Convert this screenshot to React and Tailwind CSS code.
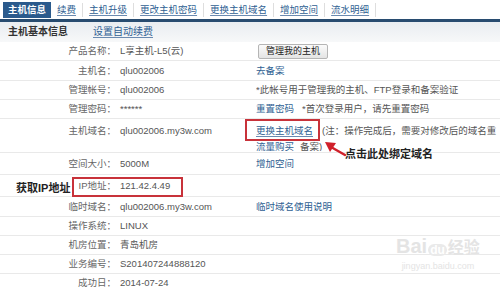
import React from 'react';

const font = { fontFamily: '"Liberation Sans", "Noto Sans CJK SC", sans-serif' };

const tabs = ['续费', '主机升级', '更改主机密码', '更换主机域名', '增加空间', '流水明细'];

const Link = ({ children }) => (
  <span className="text-[#2f5f93] underline underline-offset-2 decoration-[#6a8ab0]">{children}</span>
);

const Row = ({ label, value, extra, h = 'h-[20px]', align = 'items-center' }) => (
  <div className={`flex ${align} border-b border-[#e9e9e9] ${h}`}>
    <div className="w-[116px] shrink-0 text-right text-[#666]">{label}：</div>
    <div className="w-[140px] shrink-0 pl-[4px] text-[#555] whitespace-nowrap">{value}</div>
    <div className="flex-1 whitespace-nowrap overflow-hidden text-[#555]">{extra}</div>
  </div>
);

export default function App() {
  return (
    <div className="relative w-[500px] h-[287px] overflow-hidden bg-white text-[9.5px] leading-none" style={font}>
      {/* tab bar */}
      <div className="flex items-end h-[22px] border-b-[3px] border-[#284c70] pl-[3px]">
        <div className="h-[16px] mb-[1px] px-[5px] flex items-center bg-[#2b5a8c] text-white font-bold text-[9.5px]">主机信息</div>
        {tabs.map((t) => (
          <div key={t} className="h-[14px] mb-[2px] px-[6px] flex items-center border-r border-[#dedede] text-[9.5px]">
            <Link>{t}</Link>
          </div>
        ))}
      </div>

      {/* sub header */}
      <div className="flex items-center h-[20px] bg-gradient-to-b from-[#e9edf1] to-[#f7f8f9] pl-[8px] text-[10px]">
        <span className="font-bold text-[#333] w-[85px]">主机基本信息</span>
        <Link>设置自动续费</Link>
      </div>

      <Row
        h="h-[19px]"
        label="产品名称"
        value="L享主机-L5(云)"
        extra={
          <span className="inline-flex items-center h-[15px] px-[7px] ml-[2px] border border-[#b5b5b5] rounded-[2px] bg-gradient-to-b from-[#fbfbfb] to-[#e4e4e4] text-[#222] text-[9px]">
            管理我的主机
          </span>
        }
      />
      <Row label="主机名" value="qlu002006" extra={<Link>去备案</Link>} />
      <Row h="h-[19px]" label="管理帐号" value="qlu002006" extra="*此帐号用于管理我的主机、FTP登录和备案验证" />
      <Row
        h="h-[19px]"
        label="管理密码"
        value="******"
        extra={
          <>
            <Link>重置密码</Link>
            <span className="ml-[8px]">*首次登录用户，请先重置密码</span>
          </>
        }
      />
      <Row
        h="h-[34px]"
        align="items-start pt-[7px]"
        label="主机域名"
        value="qlu002006.my3w.com"
        extra={
          <div className="flex flex-col gap-[6px]">
            <div>
              <Link>更换主机域名</Link>
              <span className="ml-[9px]">(注：操作完成后，需要对修改后的域名重</span>
            </div>
            <div>
              <Link>流量购买</Link>
              <span className="ml-[6px]">备案)</span>
            </div>
          </div>
        }
      />
      <Row h="h-[22px]" label="空间大小" value="5000M" extra={<Link>增加空间</Link>} />
      <Row h="h-[22px]" label="IP地址" value="121.42.4.49" extra="" />
      <Row label="临时域名" value="qlu002006.my3w.com" extra={<Link>临时域名使用说明</Link>} />
      <Row h="h-[19px]" label="操作系统" value="LINUX" />
      <Row h="h-[19px]" label="机房位置" value="青岛机房" />
      <Row h="h-[19px]" label="业务编号" value="S201407244888120" />
      <Row h="h-[19px]" label="成功日" value="2014-07-24" />

      {/* annotations */}
      <div className="absolute left-[245px] top-[119px] w-[75px] h-[22px] border-2 border-[#c8323a]" />
      <div className="absolute left-[72px] top-[177px] w-[111px] h-[20px] border-2 border-[#c8323a]" />
      <div className="absolute left-[16px] top-[183px] text-[11px] font-bold text-[#222]">获取IP地址</div>
      <svg className="absolute left-[320px] top-[138px]" width="28" height="22" viewBox="0 0 28 22">
        <path d="M25 17 L11 9" stroke="#d0202a" strokeWidth="2.5" strokeLinecap="round" />
        <path d="M5 4 L16 5 L10 14 Z" fill="#d0202a" />
      </svg>
      <div className="absolute left-[345px] top-[149px] text-[11px] font-bold text-[#222]">点击此处绑定域名</div>

      {/* watermark */}
      <div className="absolute left-[396px] top-[236px] flex flex-col items-center text-[#e4e4e4] pointer-events-none">
        <div className="flex items-end font-bold">
          <span className="text-[20px] leading-none">Bai</span>
          <span className="text-[12px] mx-[1px] px-[2px] rounded-full bg-[#eaeaea] text-white">du</span>
          <span className="text-[16px] leading-none">经验</span>
        </div>
        <div className="text-[9px] mt-[6px]">jingyan.baidu.com</div>
      </div>
    </div>
  );
}
